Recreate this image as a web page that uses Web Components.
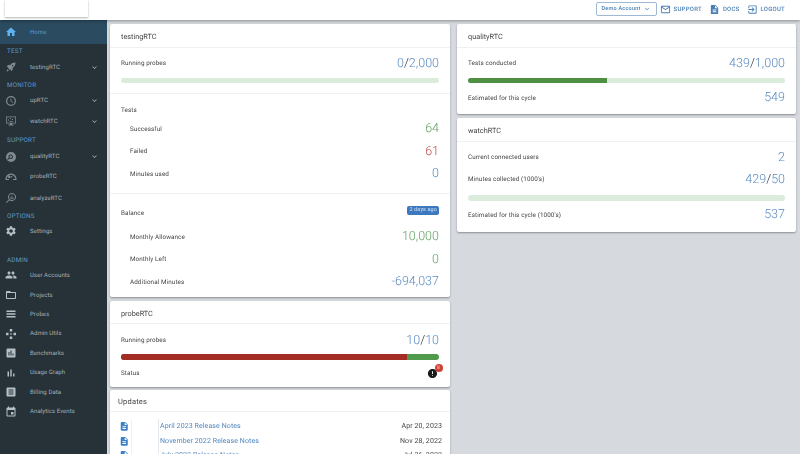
<!DOCTYPE html>
<html lang="en">
<head>
<meta charset="utf-8">
<title>testRTC dashboard</title>
<style>
  html, body { margin: 0; height: 454px; overflow: hidden; }
  body { font-family: Roboto, "Liberation Sans", sans-serif; background: #d6d9dd; text-rendering: geometricPrecision; }
</style>
</head>
<body>
<app-shell>
  <top-bar slot="top"></top-bar>
  <side-nav slot="nav">
    <nav-item icon="home" active h="24">Home</nav-item>
    <nav-head h="12">Test</nav-head>
    <nav-item icon="rocket" dim more h="22">testingRTC</nav-item>
    <nav-head h="12">Monitor</nav-head>
    <nav-item icon="clock" dim more h="21">upRTC</nav-item>
    <nav-item icon="monitor" dim more h="20">watchRTC</nav-item>
    <nav-head h="16">Support</nav-head>
    <nav-item icon="quality" dim more h="19">qualityRTC</nav-item>
    <nav-item icon="gauge" dim h="21">probeRTC</nav-item>
    <nav-item icon="analyze" dim h="22">analyzeRTC</nav-item>
    <nav-head h="12">Options</nav-head>
    <nav-item icon="settings" h="20">Settings</nav-item>
    <nav-head h="12" style="margin-top:12px">Admin</nav-head>
    <nav-item icon="people" h="20.5">User Accounts</nav-item>
    <nav-item icon="folder" h="19">Projects</nav-item>
    <nav-item icon="list" h="19.5">Probes</nav-item>
    <nav-item icon="games" h="19.5">Admin Utils</nav-item>
    <nav-item icon="assessment" h="19.5">Benchmarks</nav-item>
    <nav-item icon="bars" h="19.5">Usage Graph</nav-item>
    <nav-item icon="article" h="19.5">Billing Data</nav-item>
    <nav-item icon="event" h="19.5">Analytics Events</nav-item>
  </side-nav>

  <main-column>
    <info-card title="testingRTC" style="height:273px">
      <card-section pad="4 10">
        <stat-row label="Running probes" value="0" total="2,000"></stat-row>
        <meter-bar style="margin-top:3.5px"></meter-bar>
      </card-section>
      <card-section pad="7.5 7.5">
        <sub-title>Tests</sub-title>
        <stat-row sub label="Successful" value="64" tone="green"></stat-row>
        <stat-row sub label="Failed" value="61" tone="red"></stat-row>
        <stat-row sub label="Minutes used" value="0"></stat-row>
      </card-section>
      <card-section pad="11 5">
        <sub-title badge="2 days ago" style="margin-bottom:5px">Balance</sub-title>
        <stat-row sub label="Monthly Allowance" value="10,000" tone="green"></stat-row>
        <stat-row sub label="Monthly Left" value="0" tone="green"></stat-row>
        <stat-row sub label="Additional Minutes" value="-694,037"></stat-row>
      </card-section>
    </info-card>

    <info-card title="probeRTC" style="height:86px" head="23">
      <card-section pad="5 3">
        <stat-row label="Running probes" value="10" total="10"></stat-row>
        <meter-bar value="90" color="#a32c25" track="#4f9a4b" style="margin-top:3px"></meter-bar>
        <stat-row label="Status" style="margin-top:2.5px"><alert-mark count="8"></alert-mark></stat-row>
      </card-section>
    </info-card>

    <updates-card>
      <update-row href="#" date="Apr 20, 2023">April 2023 Release Notes</update-row>
      <update-row href="#" date="Nov 28, 2022">November 2022 Release Notes</update-row>
      <update-row href="#" date="Jul 26, 2022">July 2022 Release Notes</update-row>
    </updates-card>
  </main-column>

  <main-column>
    <info-card title="qualityRTC" style="height:90px">
      <card-section pad="4 4">
        <stat-row label="Tests conducted" value="439" total="1,000"></stat-row>
        <meter-bar value="44" style="margin-top:3.5px"></meter-bar>
        <stat-row label="Estimated for this cycle" value="549" style="margin-top:3.5px"></stat-row>
      </card-section>
    </info-card>
    <info-card title="watchRTC" style="height:114px">
      <card-section pad="4 6">
        <stat-row label="Current connected users" value="2"></stat-row>
        <stat-row label="Minutes collected (1000's)" value="429" total="50"></stat-row>
        <meter-bar style="margin-top:5px"></meter-bar>
        <stat-row label="Estimated for this cycle (1000's)" value="537" style="margin-top:3px"></stat-row>
      </card-section>
    </info-card>
  </main-column>
</app-shell>

<script>
// material style icon paths, all on a 24 box
const ICONS = {
  home: 'M10 20v-6h4v6h5v-8h3L12 3 2 12h3v8z',
  chevron: 'M16.59 8.59L12 13.17 7.41 8.59 6 10l6 6 6-6z',
  rocket: 'M21 3c-4.5 0-8 1.6-10.6 4.8L6.5 8 3 11.5l3.9 1-1 1.5 3.6 3.6 1.5-1 1 3.9 3.5-3.5.2-3.9C19.4 11 21 7.5 21 3zM15 7.5a1.5 1.5 0 1 1 0 3 1.5 1.5 0 0 1 0-3zM5 16l3 3-5 2.500z',
  clock: 'M12 2a10 10 0 1 0 0 20 10 10 0 0 0 0-20zm0 17.5a7.5 7.5 0 1 1 0-15 7.5 7.5 0 0 1 0 15zM12.8 7h-1.6v5.7l4.3 2.600.8-1.300-3.500-2.100z',
  monitor: 'M2 3h20v14h-8v2h3v2H7v-2h3v-2H2zm1.5 1.5v11h17v-11zM6 9h2v2H6zm4-3h2v2h-2zm4 2h2v2h-2zm-5 4h7v1.5H9z',
  quality: 'M12 2a10 10 0 1 0 0 20 10 10 0 0 0 0-20zm-.5 5a4.500 4.500 0 1 1-2.700 8.100l-2.900 2.900-1.400-1.400 2.900-2.900A4.500 4.500 0 0 1 11.500 7zm0 2a2.500 2.500 0 1 0 0 5 2.500 2.500 0 0 0 0-5z',
  gauge: 'M12 5C6.5 5 2 9 1 14.500V18h7v-2H3.200C4 11 7.700 7.500 12 7.500s8 3.500 8.800 8.500H16v2h7v-3.500C22 9 17.500 5 12 5zm-1 8h2.500l2-3-1-.5-2.500 2H11a2.500 2.500 0 1 0 0 .5z',
  analyze: 'M14 2a8 8 0 0 0-6.300 12.900L2 20.600 3.400 22l5.700-5.700A8 8 0 1 0 14 2zm0 2a6 6 0 1 1 0 12 6 6 0 0 1 0-12zm-3 6h1.500v4H11zm2.300-3h1.500v7h-1.500zm2.300 4.500h1.500V14h-1.500z',
  settings: 'M19.14 12.94c.04-.3.06-.61.06-.94 0-.32-.02-.64-.07-.94l2.030-1.580a.49.49 0 0 0 .12-.61l-1.920-3.320a.488.488 0 0 0-.59-.22l-2.390.96c-.5-.38-1.030-.7-1.620-.94l-.36-2.540a.484.484 0 0 0-.48-.41h-3.840c-.24 0-.43.17-.47.41l-.36 2.540c-.59.24-1.130.57-1.620.94l-2.390-.96c-.22-.08-.47 0-.59.22L2.740 8.870c-.12.21-.08.47.12.61l2.030 1.580c-.05.3-.09.63-.09.94s.02.64.07.94l-2.030 1.580a.49.49 0 0 0-.12.61l1.920 3.320c.12.22.37.29.59.22l2.390-.96c.5.38 1.030.7 1.620.94l.36 2.540c.05.24.24.41.48.41h3.840c.24 0 .44-.17.47-.41l.36-2.540c.59-.24 1.130-.56 1.620-.94l2.390.96c.22.08.47 0 .59-.22l1.920-3.320c.12-.22.07-.47-.12-.61l-2.010-1.580zM12 15.600A3.610 3.610 0 0 1 8.400 12c0-1.980 1.620-3.600 3.600-3.600s3.600 1.620 3.600 3.600-1.620 3.600-3.600 3.600z',
  people: 'M16 11c1.66 0 2.99-1.34 2.99-3S17.66 5 16 5c-1.66 0-3 1.34-3 3s1.34 3 3 3zm-8 0c1.66 0 2.99-1.34 2.99-3S9.66 5 8 5C6.34 5 5 6.34 5 8s1.34 3 3 3zm0 2c-2.33 0-7 1.170-7 3.500V19h14v-2.500c0-2.330-4.670-3.500-7-3.500zm8 0c-.29 0-.62.02-.97.05 1.160.84 1.970 1.970 1.970 3.450V19h6v-2.500c0-2.330-4.670-3.500-7-3.500z',
  folder: 'M20 6h-8l-2-2H4c-1.1 0-1.99.9-1.99 2L2 18c0 1.1.9 2 2 2h16c1.1 0 2-.9 2-2V8c0-1.1-.9-2-2-2zm0 12H4V8h16v10z',
  list: 'M3 5h18v3H3zm0 5.500h18v3H3zM3 16h18v3H3z',
  games: 'M9.5 2h5v5h-5zM2 9.500h5v5H2zm15 0h5v5h-5zM9.500 17h5v5h-5zM12 9.800l2.200 2.200-2.200 2.200L9.800 12z',
  assessment: 'M19 3H5c-1.1 0-2 .9-2 2v14c0 1.1.9 2 2 2h14c1.1 0 2-.9 2-2V5c0-1.1-.9-2-2-2zM9 17H7v-7h2v7zm4 0h-2V7h2v10zm4 0h-2v-4h2v4z',
  bars: 'M5 9.200h3V19H5zM10.600 5h2.800v14h-2.800zm5.600 8H19v6h-2.800z',
  article: 'M19 3H5c-1.1 0-2 .9-2 2v14c0 1.1.9 2 2 2h14c1.1 0 2-.9 2-2V5c0-1.1-.9-2-2-2zm-2 14H7v-2h10v2zm0-4H7v-2h10v2zm0-4H7V7h10v2z',
  event: 'M17 12h-5v5h5v-5zM16 1v2H8V1H6v2H5c-1.11 0-1.99.9-1.99 2L3 19c0 1.1.89 2 2 2h14c1.1 0 2-.9 2-2V5c0-1.1-.9-2-2-2h-1V1h-2zm3 18H5V8h14v11z',
  description: 'M14 2H6c-1.1 0-1.99.9-1.99 2L4 20c0 1.1.89 2 1.99 2H18c1.1 0 2-.9 2-2V8l-6-6zm2 16H8v-2h8v2zm0-4H8v-2h8v2zm-3-5V3.500L18.500 9H13z',
  mail: 'M20 4H4c-1.1 0-1.99.9-1.99 2L2 18c0 1.1.9 2 2 2h16c1.1 0 2-.9 2-2V6c0-1.1-.9-2-2-2zm0 14H4V8l8 5 8-5v10zm-8-7L4 6h16l-8 5z',
  logout: 'M10.090 15.590L11.500 17l5-5-5-5-1.410 1.410L12.670 11H3v2h9.670l-2.580 2.590zM19 3H5c-1.110 0-2 .9-2 2v4h2V5h14v14H5v-4H3v4c0 1.1.89 2 2 2h14c1.1 0 2-.9 2-2V5c0-1.1-.9-2-2-2z',
  error: 'M12 2C6.480 2 2 6.480 2 12s4.480 10 10 10 10-4.480 10-10S17.520 2 12 2zm1 15h-2v-2h2v2zm0-4h-2V7h2v6z'
};

const TONES = { blue: '#5a8bc2', green: '#66a266', red: '#c24f4b' };

function define(tag, css, html, setup) {
  customElements.define(tag, class extends HTMLElement {
    constructor() {
      super();
      this.attachShadow({ mode: 'open' });
    }
    connectedCallback() {
      const markup = typeof html === 'function' ? html(this) : html;
      this.shadowRoot.innerHTML = `<style>${css}</style>${markup}`;
      if (setup) setup(this);
    }
  });
}

define('ui-icon', `
  :host { display: inline-flex; width: var(--size, 12px); height: var(--size, 12px); flex: none; }
  svg { width: 100%; height: 100%; fill: currentColor; display: block; }
`, el => `<svg viewBox="0 0 24 24"><path d="${ICONS[el.getAttribute('name')]}"/></svg>`);

define('app-shell', `
  :host { display: grid; grid-template-columns: 107px 1fr; grid-template-rows: 20px 434px; width: 800px; height: 454px; filter: blur(.25px); }
  .top { grid-column: 1 / 3; position: relative; z-index: 2; }
  .nav { overflow: hidden; }
  .main { display: grid; grid-template-columns: 340px 339px; column-gap: 7px; padding: 4px 0 0 3px; overflow: hidden; align-items: start; }
`, `
  <div class="top"><slot name="top"></slot></div>
  <div class="nav"><slot name="nav"></slot></div>
  <div class="main"><slot></slot></div>
`);

define('top-bar', `
  :host { display: flex; align-items: flex-start; height: 20px; background: #fff; box-shadow: 0 1px 3px rgba(0,0,0,.35); padding: 0 15px 0 5px; box-sizing: border-box; color: #4a7fb5; font-size: 6px; font-weight: 500; letter-spacing: .25px; }
  .logo { width: 83px; height: 17px; background: #fff; box-shadow: 0 1px 2px rgba(0,0,0,.3); }
  .spacer { flex: 1; }
  .account { display: flex; align-items: center; justify-content: center; gap: 2px; width: 61px; height: 14px; margin: 2px 3px 0 0; border: 1px solid #9db9d4; border-radius: 2px; box-sizing: border-box; font-size: 5.5px; }
  .link { display: flex; align-items: center; gap: 3px; height: 18px; margin-left: 7px; }
  .link.first { margin-left: 0; }
  .account ui-icon { --size: 8px; }
  .link ui-icon { --size: 11px; }
`, `
  <div class="logo"></div>
  <div class="spacer"></div>
  <div class="account">Demo Account <ui-icon name="chevron"></ui-icon></div>
  <div class="link first"><ui-icon name="mail"></ui-icon>SUPPORT</div>
  <div class="link"><ui-icon name="description"></ui-icon>DOCS</div>
  <div class="link"><ui-icon name="logout"></ui-icon>LOGOUT</div>
`);

define('side-nav', `
  :host { display: block; height: 100%; background: #263238; }
`, `<slot></slot>`);

define('nav-item', `
  :host { display: flex; align-items: center; box-sizing: border-box; padding-left: 5px; color: #a7b1b8; font-size: 6px; letter-spacing: .08px; }
  :host([active]) { background: #2b4b60; color: #5c9bd0; }
  :host([active]) ui-icon { color: #5fb2f2; }
  :host([dim]) ui-icon.main { color: #7f8b91; }
  ui-icon.main { --size: 12px; margin-right: 13px; color: #b5bfc5; }
  ui-icon.more { --size: 9px; margin-left: auto; margin-right: 8px; }
`, el => {
  el.style.height = el.getAttribute('h') + 'px';
  return `<ui-icon class="main" name="${el.getAttribute('icon')}"></ui-icon><slot></slot>` +
    (el.hasAttribute('more') ? '<ui-icon class="more" name="chevron"></ui-icon>' : '');
});

define('nav-head', `
  :host { display: flex; align-items: center; box-sizing: border-box; padding: 1px 0 0 7px; color: #5e9bd0; font-size: 6.3px; letter-spacing: .2px; text-transform: uppercase; }
`, el => {
  el.style.height = el.getAttribute('h') + 'px';
  return '<slot></slot>';
});

define('main-column', `
  :host { display: flex; flex-direction: column; gap: 4px; }
`, `<slot></slot>`);

define('info-card', `
  :host { display: block; background: #fff; border-radius: 2px; box-shadow: 0 1px 2px rgba(0,0,0,.35); color: #444; flex: none; box-sizing: border-box; overflow: hidden; }
  header { box-sizing: border-box; display: flex; align-items: center; padding: 0 11px; font-size: 7.3px; border-bottom: 1px solid #eef0f1; }
`, el => {
  // shorter headers keep the title where it sits on a full height one
  const head = Number(el.getAttribute('head') || 24);
  return `<header style="height:${head}px;padding-top:${1 + (24 - head) * 2}px">${el.getAttribute('title')}</header><slot></slot>`;
});

define('card-section', `
  :host { display: block; padding: var(--pt) 11px var(--pb); border-bottom: 1px solid #eef0f1; }
  :host(:last-child) { border-bottom: 0; }
`, `<slot></slot>`, el => {
  const [top, bottom] = el.getAttribute('pad').split(' ');
  el.style.setProperty('--pt', top + 'px');
  el.style.setProperty('--pb', bottom + 'px');
});

define('sub-title', `
  :host { display: flex; justify-content: space-between; height: 16px; align-items: center; font-size: 6.3px; color: #444; letter-spacing: .1px; position: relative; }
  .badge { position: absolute; right: 0; top: 1px; height: 9px; line-height: 9px; padding: 0 2px; background: #3b78c0; color: #cfe0f2; border-radius: 2px; font-size: 5.5px; }
`, el => `<slot></slot>` + (el.hasAttribute('badge') ? `<span class="badge">${el.getAttribute('badge')}</span>` : ''));

define('stat-row', `
  :host { display: flex; align-items: center; justify-content: space-between; height: 22px; font-size: 6.3px; color: #444; letter-spacing: .1px; }
  :host([sub]) { height: 22.5px; padding-left: 9px; }
  .value { font-size: 12.5px; font-weight: 300; letter-spacing: 0; }
  .sep { color: #333; }
`, el => {
  const tone = TONES[el.getAttribute('tone')] || TONES.blue;
  const value = el.getAttribute('value');
  const total = el.getAttribute('total');
  const number = value === null ? '<slot></slot>'
    : `<span class="value" style="color:${tone}">${value}${total ? `<span class="sep">/</span>${total}` : ''}</span>`;
  return `<span>${el.getAttribute('label')}</span>${number}`;
});

define('meter-bar', `
  :host { display: block; height: 5.5px; margin-top: 4px; border-radius: 3px; overflow: hidden; background: var(--track, #dcecdc); }
  div { height: 100%; background: var(--fill, #4f8f43); }
`, el => {
  if (el.hasAttribute('track')) el.style.setProperty('--track', el.getAttribute('track'));
  if (el.hasAttribute('color')) el.style.setProperty('--fill', el.getAttribute('color'));
  return `<div style="width:${el.getAttribute('value') || 0}%"></div>`;
});

define('alert-mark', `
  :host { display: inline-flex; position: relative; color: #1a1a1a; margin-right: 1px; margin-top: 1px; }
  ui-icon { --size: 11px; }
  span { position: absolute; right: -4.5px; top: -4.5px; width: 8px; height: 8px; border-radius: 50%; background: #cf3f35; color: #f6d8d5; font-size: 5px; line-height: 8px; text-align: center; }
`, el => `<ui-icon name="error"></ui-icon><span>${el.getAttribute('count')}</span>`);

define('updates-card', `
  :host { display: block; background: #fff; border-radius: 2px 2px 0 0; box-shadow: 0 1px 2px rgba(0,0,0,.35); margin-top: -1px; }
  header { height: 22px; box-sizing: border-box; display: flex; align-items: center; padding: 2px 8px 0; font-size: 7.5px; color: #444; letter-spacing: .2px; border-bottom: 1px solid #eef0f1; }
  .rows { padding-top: 7px; }
`, `<header>Updates</header><div class="rows"><slot></slot></div>`);

define('update-row', `
  :host { display: grid; grid-template-columns: 13px 27px 1fr auto; align-items: center; height: 14.5px; padding: 0 8px; font-size: 7px; letter-spacing: .1px; color: #444; }
  ui-icon { --size: 10.5px; color: #3f7fc4; justify-self: center; }
  .gap { border-left: 1px solid #eef0f1; height: 100%; }
  a { color: #4f86c0; text-decoration: none; border-left: 1px solid #e3e8ee; height: 100%; display: flex; align-items: center; padding-left: 1px; }
`, el => `
  <ui-icon name="description"></ui-icon>
  <span class="gap"></span>
  <a href="${el.getAttribute('href')}"><slot></slot></a>
  <span>${el.getAttribute('date')}</span>
`);
</script>
</body>
</html>
